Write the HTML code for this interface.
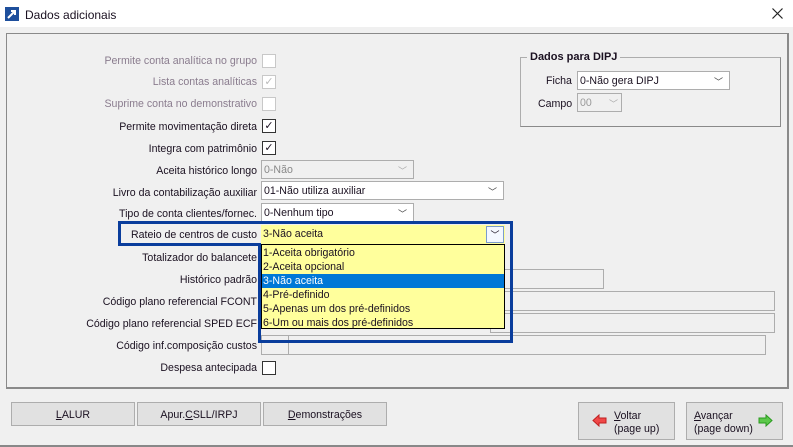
<!DOCTYPE html><html><head><meta charset="utf-8"><style>
*{box-sizing:border-box}
body{margin:0;width:793px;height:447px;background:#f0f0f0;font-family:"Liberation Sans",Tahoma,sans-serif;font-size:10.6px;color:#1a1020;position:relative;overflow:hidden}
.a{position:absolute}
.lbl{position:absolute;right:536px;white-space:nowrap}
.g{color:#8a7c8e}
.cb{position:absolute;left:262px;width:14px;height:14px;border:1px solid #333;background:#fff}
.cb.d{border-color:#c8c8c8}
.sel{position:absolute;height:19px;border:1px solid #adadad;background:#fff;padding:3px 0 0 2px;white-space:nowrap}
.sel .ar{position:absolute;right:6px;top:3px;font-size:9px;color:#444}
.fld{position:absolute;height:20px;border:1px solid #adadad}
.btn{position:absolute;border:1px solid #adadad;background:#e1e1e1;text-align:center;line-height:24px}
</style></head><body>
<div class="a" style="left:0;top:0;width:793px;height:27px;background:#fff"></div>
<svg class="a" style="left:5px;top:7px" width="14" height="14"><rect width="14" height="14" fill="#1e4f9c"/><path d="M3 11 L10 4 M6 4 H10 V8" stroke="#fff" stroke-width="2" fill="none"/></svg>
<div class="a" style="left:25px;top:8px;font-size:12px">Dados adicionais</div>
<svg class="a" style="left:772px;top:8px" width="11" height="11"><path d="M0.5 0.5 L10.5 10.5 M10.5 0.5 L0.5 10.5" stroke="#222" stroke-width="1.2"/></svg>
<div class="a" style="left:6px;top:33px;width:783px;height:356px;border:1px solid #8a8a8a;border-right-width:2px;border-bottom-width:2px"></div>

<div class="lbl g" style="top:55px">Permite conta analítica no grupo</div><div class="cb d" style="top:54px"></div>
<div class="lbl g" style="top:76px">Lista contas analíticas</div><div class="cb d" style="top:75px;color:#bbb;font-size:11px;line-height:12px;text-align:center">✓</div>
<div class="lbl g" style="top:98px">Suprime conta no demonstrativo</div><div class="cb d" style="top:97px"></div>
<div class="lbl" style="top:121px">Permite movimentação direta</div><div class="cb" style="top:119px;font-size:11px;line-height:12px;text-align:center">✓</div>
<div class="lbl" style="top:143px">Integra com patrimônio</div><div class="cb" style="top:141px;font-size:11px;line-height:12px;text-align:center">✓</div>
<div class="lbl" style="top:165px">Aceita histórico longo</div>
<div class="sel" style="left:261px;top:160px;width:153px;background:#f0f0f0;color:#888">0-Não<span class="ar" style="color:#aaa">﹀</span></div>
<div class="lbl" style="top:187px">Livro da contabilização auxiliar</div>
<div class="sel" style="left:261px;top:181px;width:243px">01-Não utiliza auxiliar<span class="ar">﹀</span></div>
<div class="lbl" style="top:208px">Tipo de conta clientes/fornec.</div>
<div class="sel" style="left:261px;top:203px;width:153px">0-Nenhum tipo<span class="ar">﹀</span></div>

<div class="lbl" style="top:252px">Totalizador do balancete</div>
<div class="lbl" style="top:274px">Histórico padrão</div><div class="fld" style="left:490px;top:269px;width:114px"></div>
<div class="lbl" style="top:296px">Código plano referencial FCONT</div><div class="fld" style="left:490px;top:291px;width:285px"></div>
<div class="lbl" style="top:318px">Código plano referencial SPED ECF</div><div class="fld" style="left:490px;top:313px;width:285px"></div>
<div class="lbl" style="top:340px">Código inf.composição custos</div>
<div class="fld" style="left:261px;top:335px;width:28px"></div><div class="fld" style="left:288px;top:335px;width:478px"></div>
<div class="lbl" style="top:362px">Despesa antecipada</div><div class="cb" style="top:361px"></div>

<div class="a" style="left:118px;top:221px;width:395px;height:25px;border:3px solid #0a3d9c;border-bottom:none"></div>
<div class="a" style="left:118px;top:243px;width:143px;height:3px;background:#0a3d9c"></div>
<div class="a" style="left:258px;top:243px;width:255px;height:100px;border:3px solid #0a3d9c;border-top:none"></div>
<div class="lbl" style="top:229px">Rateio de centros de custo</div>
<div class="a" style="left:261px;top:225px;width:244px;height:19px;background:#ffff9c;padding:3px 0 0 2px">3-Não aceita</div>
<div class="a" style="left:486px;top:226px;width:18px;height:17px;border:1px solid #7a9ccc;background:#f4f8ff;font-size:9px;text-align:center;line-height:17px">﹀</div>
<div class="a" style="left:261px;top:244px;width:244px;height:85px;background:#ffff9c;border:1px solid #000;line-height:14px;padding:1px 1px 0">
<div>1-Aceita obrigatório</div><div>2-Aceita opcional</div><div style="background:#0078d7;color:#fff;margin:0 -1px;padding:0 1px">3-Não aceita</div><div>4-Pré-definido</div><div>5-Apenas um dos pré-definidos</div><div>6-Um ou mais dos pré-definidos</div></div>

<div class="a" style="left:520px;top:57px;width:261px;height:70px;border:1px solid #adadad;border-right-color:#8a8a8a;border-bottom-color:#8a8a8a"></div>
<div class="a" style="left:527px;top:51px;background:#f0f0f0;padding:0 3px;font-weight:bold;font-size:11px">Dados para DIPJ</div>
<div class="a" style="left:546px;top:75px">Ficha</div>
<div class="sel" style="left:577px;top:71px;width:153px;color:#1a1020">0-Não gera DIPJ<span class="ar">﹀</span></div>
<div class="a" style="left:538px;top:98px">Campo</div>
<div class="sel" style="left:577px;top:93px;width:45px;background:#f0f0f0;color:#999">00<span class="ar" style="color:#aaa;right:3px">﹀</span></div>

<div class="btn" style="left:11px;top:402px;width:124px;height:24px"><u>L</u>ALUR</div>
<div class="btn" style="left:137px;top:402px;width:124px;height:24px">Apur.<u>C</u>SLL/IRPJ</div>
<div class="btn" style="left:263px;top:402px;width:124px;height:24px"><u>D</u>emonstrações</div>
<div class="btn" style="left:578px;top:402px;width:97px;height:38px;line-height:13px;text-align:left;padding:7px 0 0 35px"><u>V</u>oltar<br>(page up)</div>
<svg class="a" style="left:592px;top:414px" width="15" height="13"><path d="M1 6.5 L7 1 V4 H14 V9 H7 V12 Z" fill="#f04848" stroke="#c02020"/></svg>
<div class="btn" style="left:686px;top:402px;width:97px;height:38px;line-height:13px;text-align:left;padding:7px 0 0 7px"><u>A</u>vançar<br>(page down)</div>
<svg class="a" style="left:758px;top:414px" width="15" height="13"><path d="M14 6.5 L8 1 V4 H1 V9 H8 V12 Z" fill="#5cc84a" stroke="#2a9a20"/></svg>
<div class="a" style="left:0;top:445px;width:793px;height:2px;background:#888"></div>
</body></html>
